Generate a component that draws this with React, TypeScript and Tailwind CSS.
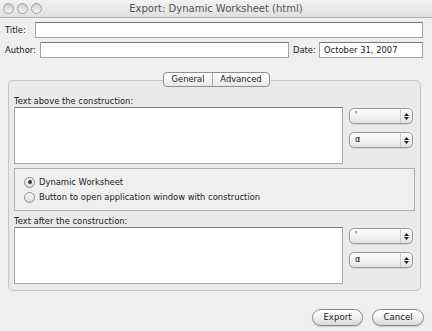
// Export dialog - "Dynamic Worksheet (html)"
// Mac OS X Aqua style sheet, rebuilt with plain flex layout

const FONT = { fontFamily: '"DejaVu Sans", "Liberation Sans", sans-serif' };

function TrafficLight() {
  return (
    <span className="block h-[11px] w-[11px] rounded-full border border-[#a0a0a0] bg-gradient-to-b from-[#cdcdcd] to-[#f6f6f6]" />
  );
}

function TextField({ value = '', className = '' }: { value?: string; className?: string }) {
  return (
    <div
      className={`h-[16px] border border-[#a4a4a4] border-t-[#767676] bg-white pl-[4px] text-[8.4px] leading-[14px] text-[#1a1a1a] ${className}`}
    >
      {value}
    </div>
  );
}

function PopUp({ label }: { label: string }) {
  return (
    <div className="flex h-[16px] w-[64px] items-center rounded-[5px] border border-[#9a9a9a] bg-gradient-to-b from-white via-[#f3f3f3] to-[#e0e0e0] shadow-[0_1px_0_rgba(0,0,0,0.08)]">
      <span className="flex-1 pl-[5px] text-[8px] leading-none text-black">{label}</span>
      <span className="flex h-full w-[12px] flex-col items-center justify-center gap-[1px] border-l border-[#cccccc]">
        <svg width="5" height="3" viewBox="0 0 5 3">
          <path d="M2.5 0 L5 3 L0 3 Z" fill="#222" />
        </svg>
        <svg width="5" height="3" viewBox="0 0 5 3">
          <path d="M0 0 L5 0 L2.5 3 Z" fill="#222" />
        </svg>
      </span>
    </div>
  );
}

function Radio({ checked, label }: { checked?: boolean; label: string }) {
  return (
    <div className="flex items-center gap-[4px]">
      <span className="flex h-[11px] w-[11px] items-center justify-center rounded-full border border-[#8c8c8c] bg-gradient-to-b from-[#f8f8f8] to-[#dcdcdc]">
        {checked && <span className="h-[4px] w-[4px] rounded-full bg-[#333]" />}
      </span>
      <span className="text-[8.4px] leading-none text-[#1a1a1a]">{label}</span>
    </div>
  );
}

function TextBlock({ label }: { label: string }) {
  return (
    <div className="flex flex-col">
      <div className="h-[12px] text-[8.4px] leading-[12px] text-[#1a1a1a]">{label}</div>
      <div className="flex gap-[6px]">
        <div className="h-[57px] w-[329px] border border-[#a8a8a8] border-t-[#7a7a7a] bg-white" />
        <div className="flex flex-col gap-[8px] pt-[1px]">
          <PopUp label="'" />
          <PopUp label="α" />
        </div>
      </div>
    </div>
  );
}

function AquaButton({ label, className = '' }: { label: string; className?: string }) {
  return (
    <button
      className={`h-[17px] rounded-full border border-[#8a8a8a] bg-gradient-to-b from-white via-[#f0f0f0] to-[#d8d8d8] text-[8.6px] leading-none text-[#1a1a1a] shadow-[0_1px_1px_rgba(0,0,0,0.15)] ${className}`}
    >
      {label}
    </button>
  );
}

export default function App() {
  return (
    <div className="flex h-[331px] w-[432px] flex-col overflow-hidden bg-[#efefef]" style={FONT}>
      {/* Title bar */}
      <div className="flex h-[18px] items-center border-b border-[#acacac] bg-gradient-to-b from-[#f2f2f2] to-[#e0e0e0]">
        <div className="flex w-[60px] gap-[3px] pl-[3px]">
          <TrafficLight />
          <TrafficLight />
          <TrafficLight />
        </div>
        <div className="flex-1 text-center text-[10px] leading-none text-[#555555]">
          Export: Dynamic Worksheet (html)
        </div>
        <div className="w-[60px]" />
      </div>

      {/* Title / Author / Date */}
      <div className="mt-[4px] flex items-center pl-[5px] pr-[9px]">
        <span className="w-[30px] text-[8.4px] text-[#1a1a1a]">Title:</span>
        <TextField className="flex-1" />
      </div>
      <div className="mt-[4px] flex items-center pl-[5px] pr-[9px]">
        <span className="w-[35px] text-[8.4px] text-[#1a1a1a]">Author:</span>
        <TextField className="w-[249px]" />
        <span className="ml-[4px] w-[26px] text-[8.4px] text-[#1a1a1a]">Date:</span>
        <TextField className="flex-1" value="October 31, 2007" />
      </div>

      {/* Tabs */}
      <div className="relative z-10 mt-[14px] mb-[-7px] flex justify-center pl-[1px]">
        <div className="flex h-[15px] overflow-hidden rounded-[4px] border border-[#8f8f8f] bg-gradient-to-b from-white to-[#e8e8e8] text-[8.4px] leading-[13px] text-[#1a1a1a]">
          <span className="w-[48px] text-center">General</span>
          <span className="w-[57px] border-l border-[#a8a8a8] text-center">Advanced</span>
        </div>
      </div>

      {/* Group box */}
      <div className="mx-[8px] mr-[11px] flex h-[211px] flex-col rounded-[5px] border border-[#c4c4c4] bg-[#eaeaea] px-[5px] pt-[14px]">
        <TextBlock label="Text above the construction:" />

        <div className="mt-[4px] flex h-[43px] flex-col justify-center gap-[4px] border border-[#b0b0b0] bg-[#efefef] pl-[9px]">
          <Radio checked label="Dynamic Worksheet" />
          <Radio label="Button to open application window with construction" />
        </div>

        <div className="mt-[4px]">
          <TextBlock label="Text after the construction:" />
        </div>
      </div>

      {/* Buttons */}
      <div className="mt-[18px] flex justify-end gap-[9px] pr-[8px]">
        <AquaButton label="Export" className="w-[51px]" />
        <AquaButton label="Cancel" className="w-[52px]" />
      </div>
    </div>
  );
}
